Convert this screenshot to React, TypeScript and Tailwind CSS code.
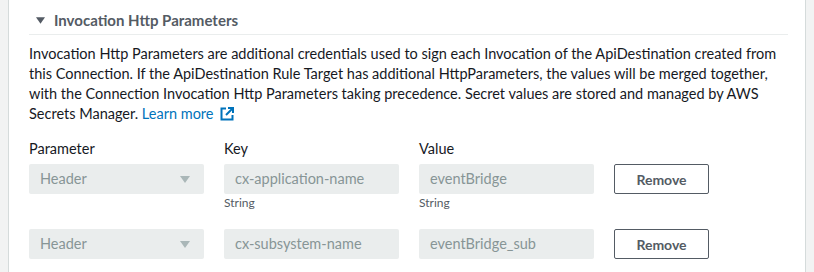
import React from "react";

const font = { fontFamily: 'Lato, "Open Sans", sans-serif' };

function Caret({ className, w = 10, h = 7 }: { className?: string; w?: number; h?: number }) {
  return (
    <svg width={w} height={h} viewBox="0 0 10 7" className={className}>
      <path d="M0 0 H10 L5 7 Z" fill="currentColor" />
    </svg>
  );
}

function ExternalIcon() {
  return (
    <svg width="14" height="14" viewBox="0 0 14 14" className="inline-block align-[-2px] ml-[6px]">
      <path d="M6 1.5 H1.5 V12.5 H12.5 V8" fill="none" stroke="currentColor" strokeWidth="2" />
      <path d="M8 1 H13 V6" fill="none" stroke="currentColor" strokeWidth="2" />
      <path d="M13 1 L6 8" fill="none" stroke="currentColor" strokeWidth="2" />
    </svg>
  );
}

function Row({ keyName, value, showHint }: { keyName: string; value: string; showHint: boolean }) {
  return (
    <div className="flex gap-5 items-start">
      <div className="w-[175px]">
        <div className="h-[30px] rounded-[2px] bg-[#eaeded] flex items-center justify-between pl-[11px] pr-[14px] text-[14.5px] text-[#879596]">
          <span>Header</span>
          <Caret className="text-[#aab7b8]" />
        </div>
      </div>
      <div className="w-[175px]">
        <div className="h-[30px] rounded-[2px] bg-[#eaeded] flex items-center pl-[11px] text-[14.5px] text-[#879596]">
          {keyName}
        </div>
        {showHint && <div className="text-[12px] leading-[16px] mt-[1px] text-[#545b64]">String</div>}
      </div>
      <div className="w-[175px]">
        <div className="h-[30px] rounded-[2px] bg-[#eaeded] flex items-center pl-[11px] text-[14.5px] text-[#879596]">
          {value}
        </div>
        {showHint && <div className="text-[12px] leading-[16px] mt-[1px] text-[#545b64]">String</div>}
      </div>
      <button className="w-[95px] h-[30px] rounded-[2px] border border-[#545b64] bg-white text-[14px] font-bold text-[#545b64] flex items-center justify-center">
        Remove
      </button>
    </div>
  );
}

export default function App() {
  return (
    <div className="w-[814px] h-[272px] bg-[#f2f3f3] px-[8px] overflow-hidden" style={font}>
      <div className="h-full bg-white border-x border-[#d5dbdb] pl-[20px] pr-[17px]">
        <div className="flex items-center h-[35px] border-b border-[#eaeded] pl-[7px] pt-[6px]">
          <Caret className="text-[#545b64]" w={9} h={7} />
          <span className="ml-[9px] text-[15px] font-bold text-[#545b64]">Invocation Http Parameters</span>
        </div>
        <p className="mt-[9px] text-[14.5px] leading-[20px] text-[#16191f] whitespace-nowrap">
          Invocation Http Parameters are additional credentials used to sign each Invocation of the ApiDestination created from
          <br />
          this Connection. If the ApiDestination Rule Target has additional HttpParameters, the values will be merged together,
          <br />
          with the Connection Invocation Http Parameters taking precedence. Secret values are stored and managed by AWS
          <br />
          Secrets Manager.{" "}
          <span className="text-[#0073bb]">
            Learn more
            <ExternalIcon />
          </span>
        </p>
        <div className="mt-[15px] flex gap-5 text-[14.5px] leading-[20px] text-[#16191f]">
          <div className="w-[175px]">Parameter</div>
          <div className="w-[175px]">Key</div>
          <div className="w-[175px]">Value</div>
        </div>
        <div className="mt-[5px]">
          <Row keyName="cx-application-name" value="eventBridge" showHint />
        </div>
        <div className="mt-[18px]">
          <Row keyName="cx-subsystem-name" value="eventBridge_sub" showHint={false} />
        </div>
      </div>
    </div>
  );
}
